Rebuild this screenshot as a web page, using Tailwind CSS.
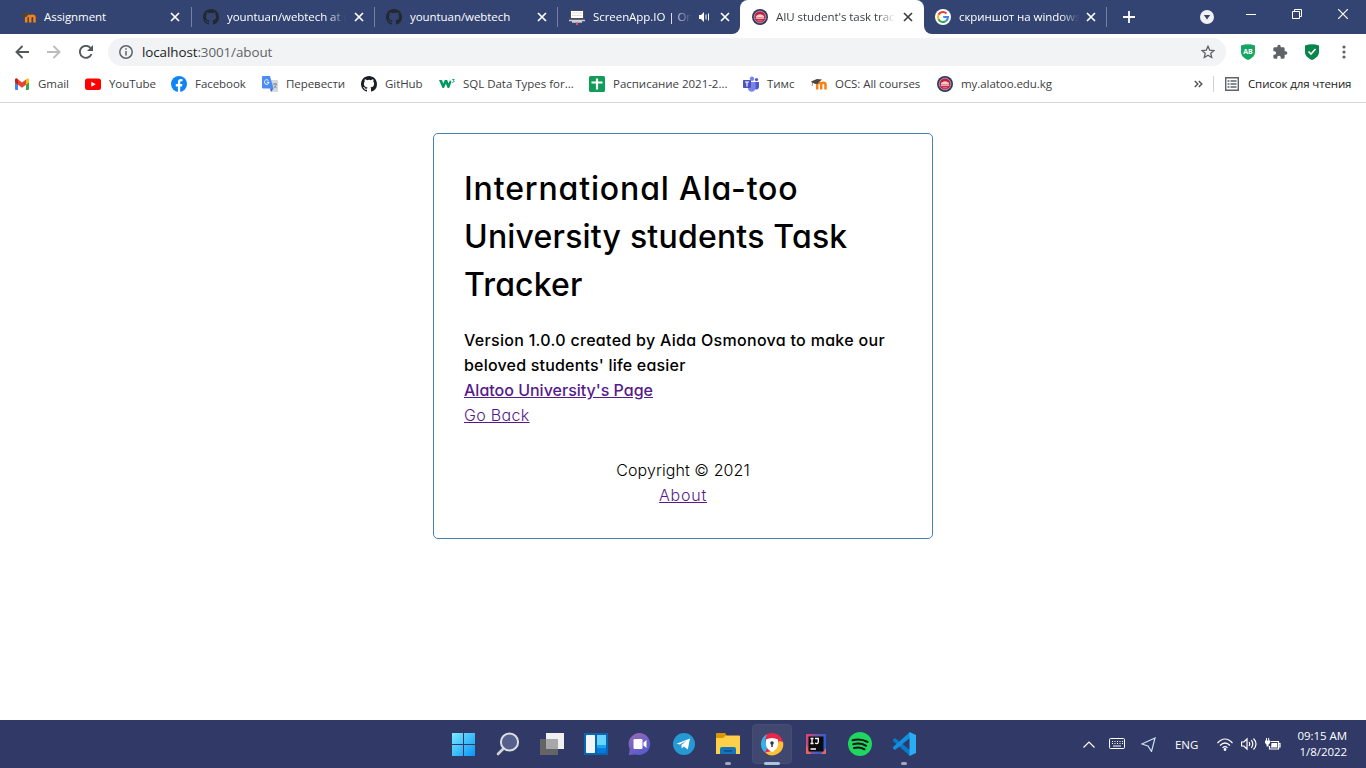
<!DOCTYPE html>
<html lang="en">
<head>
<meta charset="utf-8">
<title>AIU student's task tracker</title>
<script src="https://cdn.jsdelivr.net/npm/@tailwindcss/browser@4"></script>
</head>
<body class="flex h-screen w-screen flex-col overflow-hidden bg-white font-['Open_Sans',sans-serif] text-[11.5px] leading-4 tracking-[-0.06px] whitespace-nowrap text-[#3c4043]">
<svg class="hidden">
  <symbol id="x" viewBox="0 0 10 10"><path d="M1 1l8 8M9 1L1 9" fill="none" stroke="currentColor" stroke-width="1.7"/></symbol>
  <symbol id="github" viewBox="0 0 16 16"><path fill="currentColor" d="M8 0C3.58 0 0 3.58 0 8c0 3.54 2.29 6.53 5.47 7.59.4.07.55-.17.55-.38 0-.19-.01-.82-.01-1.49-2.01.37-2.53-.49-2.69-.94-.09-.23-.48-.94-.82-1.13-.28-.15-.68-.52-.01-.53.63-.01 1.08.58 1.23.82.72 1.21 1.87.87 2.33.66.07-.52.28-.87.51-1.07-1.78-.2-3.64-.89-3.64-3.95 0-.87.31-1.59.82-2.15-.08-.2-.36-1.02.08-2.12 0 0 .67-.21 2.2.82a7.6 7.6 0 0 1 4 0c1.53-1.04 2.2-.82 2.2-.82.44 1.1.16 1.92.08 2.12.51.56.82 1.27.82 2.15 0 3.07-1.87 3.75-3.65 3.95.29.25.54.73.54 1.48 0 1.07-.01 1.93-.01 2.2 0 .21.15.46.55.38A8 8 0 0 0 16 8c0-4.42-3.58-8-8-8z"/></symbol>
  <symbol id="aiu" viewBox="0 0 16 16"><circle cx="8" cy="8" r="8" fill="#34365e"/><circle cx="8" cy="8" r="5.900" fill="#c3203a" stroke="#a9a2b5" stroke-width=".9"/><path d="M4 7Q8 3.500 12 7v1.500H4z" fill="#f3cdd2"/><path d="M3.800 9.300h8.400" stroke="#eaa9b1" stroke-width="1.600"/><path d="M5.500 11.800h5" stroke="#e0808c"/></symbol>
  <symbol id="moodle" viewBox="0 0 16 16"><path d="M6.200 13.500V8.700c0-2.600 4-2.600 4 0v4.800M10.200 8.700c0-2.600 4.300-2.600 4.300 0v4.800" fill="none" stroke="#f98012" stroke-width="2.500"/><path d="M0 5.500l6-2.500 5 .4-3.500 3.200-1 1.500-3-.3-2-1.300v3.500H.9V6.600z" fill="#4b4540"/></symbol>
  <symbol id="google" viewBox="0 0 16 16"><circle cx="8" cy="8" r="8" fill="#fff"/><path d="M11.500 4.500A5 5 0 0 0 3.500 5.800" fill="none" stroke="#ea4335" stroke-width="2"/><path d="M3.500 5.800a5 5 0 0 0 0 4.400" fill="none" stroke="#fbbc05" stroke-width="2"/><path d="M3.500 10.200A5 5 0 0 0 11 12" fill="none" stroke="#34a853" stroke-width="2"/><path d="M11 12a5 5 0 0 0 2-4H8.200" fill="none" stroke="#4285f4" stroke-width="2"/></symbol>
</svg>

<!-- Tab strip -->
<header class="flex h-[34px] shrink-0 bg-white text-white">
  <div class="flex w-[740px] rounded-br-lg bg-[#334472] pl-2">
    <div class="flex w-[184px] items-center pl-3">
      <svg class="size-4"><use href="#moodle"/></svg><span class="ml-2 w-[123px] overflow-hidden">Assignment</span><svg class="ml-[3px] size-[10px]"><use href="#x"/></svg>
      <i class="ml-auto h-5 w-px bg-[#76819f]"></i>
    </div>
    <div class="flex w-[183px] items-center pl-[11px]">
      <svg class="size-4 text-[#23272e]"><use href="#github"/></svg><span class="ml-2 w-[119px] overflow-hidden mask-r-from-85% mask-r-to-100%">yountuan/webtech at main</span><svg class="ml-[8px] size-[10px]"><use href="#x"/></svg>
      <i class="ml-auto h-5 w-px bg-[#76819f]"></i>
    </div>
    <div class="flex w-[183px] items-center pl-[11px]">
      <svg class="size-4 text-[#23272e]"><use href="#github"/></svg><span class="ml-2 w-[119px] overflow-hidden">yountuan/webtech</span><svg class="ml-[8px] size-[10px]"><use href="#x"/></svg>
      <i class="ml-auto h-5 w-px bg-[#76819f]"></i>
    </div>
    <div class="flex w-[182px] items-center pl-[11px]">
      <svg class="size-4" viewBox="0 0 16 16"><path d="M1.500 1.500h13v8h-13z" fill="#fff" stroke="#4b4b50"/><path d="M3 4h10M3 6.500h10" stroke="#ddd"/><path d="M0 11.500h16M3 13h10" stroke="#cfcfd2" stroke-width="1.300"/><path d="M8 13.500V16" stroke="#d65562" stroke-width="2"/></svg>
      <span class="ml-2 w-[99px] overflow-hidden mask-r-from-80% mask-r-to-100%">ScreenApp.IO | Online</span>
      <svg class="ml-[7px] h-3 w-[11px]" viewBox="0 0 11 12"><path d="M0 4h2l3-3v10L2 8H0z" fill="#fff"/><path d="M7 3.500v5M9.500 2.500v7" stroke="#fff"/></svg>
      <svg class="ml-[10px] size-[10px]"><use href="#x"/></svg>
    </div>
  </div>
  <div class="w-[184px] bg-[linear-gradient(#334472_50%,#fff_50%)]">
    <div class="flex h-full items-center rounded-t-lg bg-white pl-3 text-[#3c4043]">
      <svg class="size-4"><use href="#aiu"/></svg><span class="ml-2 w-[119px] overflow-hidden mask-r-from-85% mask-r-to-100%">AIU student's task tracker</span><svg class="ml-[8px] size-[10px]"><use href="#x"/></svg>
    </div>
  </div>
  <div class="flex flex-1 rounded-bl-lg bg-[#334472]">
    <div class="flex w-[183px] items-center pl-[11px]">
      <svg class="size-4"><use href="#google"/></svg><span class="ml-2 w-[120px] overflow-hidden mask-r-from-85% mask-r-to-100%">скриншот на windows 10</span><svg class="ml-[7px] size-[10px]"><use href="#x"/></svg>
      <i class="ml-auto h-5 w-px bg-[#76819f]"></i>
    </div>
    <div class="flex flex-1 items-center">
      <svg class="ml-4 size-3" viewBox="0 0 12 12"><path d="M6 0v12M0 6h12" stroke="#fff" stroke-width="1.800"/></svg>
      <svg class="ml-[65px] size-[14px]" viewBox="0 0 14 14"><circle cx="7" cy="7" r="7" fill="#f1f1f1"/><path d="M3.800 5h6.400L7 9.500z" fill="#334472"/></svg>
      <svg class="mb-1.5 ml-8 h-3 w-[10px]" viewBox="0 0 10 12"><path d="M0 6.500h10" stroke="#fff"/></svg>
      <svg class="mb-1.5 ml-[36px] size-[10px]" viewBox="0 0 10 10" fill="none" stroke="#fff"><path d="M.5 2.500h7v7h-7zM2.500 2.500v-2h7v7h-2"/></svg>
      <svg class="mb-1.5 ml-[36px] size-[10px]" viewBox="0 0 10 10"><path d="M0 0l10 10M10 0L0 10" stroke="#fff" stroke-width="1.200"/></svg>
    </div>
  </div>
</header>

<!-- Toolbar -->
<div class="flex h-9 shrink-0 items-center text-[#5f6368]">
  <svg class="ml-[15px] size-[14px]" viewBox="0 0 14 14" fill="none" stroke="#54585d" stroke-width="1.900"><path d="M14 7H1.500M7.500 1L1.500 7l6 6"/></svg>
  <svg class="ml-[18px] size-[14px]" viewBox="0 0 14 14" fill="none" stroke="#babcbe" stroke-width="1.900"><path d="M0 7h12.500M6.500 1l6 6-6 6"/></svg>
  <svg class="ml-[18px] size-[14px]" viewBox="0 0 14 14"><path d="M12.500 9A6 6 0 1 1 11.500 3" fill="none" stroke="#54585d" stroke-width="1.900"/><path d="M14 0v6H8z" fill="#54585d"/></svg>
  <div class="ml-[15px] flex h-7 w-[1118px] items-center rounded-full bg-[#f1f3f4] pl-[11px]">
    <svg class="size-[14px]" viewBox="0 0 14 14" fill="none" stroke="#5f6368" stroke-width="1.500"><circle cx="7" cy="7" r="6.200"/><path d="M7 6v4.500M7 3.300v1.500"/></svg>
    <span class="ml-[9px] text-[13.4px] tracking-[-0.08px]"><span class="text-[#202124]">localhost</span>:3001/about</span>
    <svg class="mr-[11px] ml-auto size-[14px]" viewBox="0 0 14 14"><path d="M7 1.200l1.700 3.900 4.300.4-3.200 2.800.9 4.200L7 10.300l-3.700 2.200.9-4.200L1 5.500l4.300-.4z" fill="none" stroke="#5f6368" stroke-width="1.300"/></svg>
  </div>
  <svg class="ml-[14px] size-4" viewBox="0 0 16 16"><path d="M1 1.500Q8-1 15 1.500V8c0 4-3.500 6.500-7 8-3.500-1.500-7-4-7-8z" fill="#16a763"/><text x="8" y="10" font-size="7" font-weight="700" letter-spacing="0" text-anchor="middle" fill="#fff">AB</text></svg>
  <svg class="ml-4 size-4" viewBox="0 0 24 24"><path fill="#5f6368" d="M20.500 11H19V7a2 2 0 0 0-2-2h-4V3.500a2.500 2.500 0 0 0-5 0V5H4a2 2 0 0 0-2 2v3.800h1.500a2.700 2.700 0 0 1 0 5.400H2V20c0 1.100.9 2 2 2h3.800v-1.500a2.700 2.700 0 0 1 5.400 0V22H17a2 2 0 0 0 2-2v-4h1.500a2.500 2.500 0 0 0 0-5z"/></svg>
  <svg class="ml-4 size-4" viewBox="0 0 16 16"><path d="M1 1.500Q8-1 15 1.500V8c0 4-3.500 6.500-7 8-3.500-1.500-7-4-7-8z" fill="#07864b"/><path d="M4.500 7.500l2.500 2.500 4.500-5" fill="none" stroke="#fff" stroke-width="1.600"/></svg>
  <svg class="ml-[22px] h-[14px] w-1" viewBox="0 0 4 14" fill="#5f6368"><circle cx="2" cy="2" r="1.600"/><circle cx="2" cy="7" r="1.600"/><circle cx="2" cy="12" r="1.600"/></svg>
</div>

<!-- Bookmarks -->
<nav class="flex h-[33px] shrink-0 items-center border-b border-[#d5d7da] pb-1 pl-[14px]">
  <div class="flex w-[71px] items-center gap-2"><svg class="size-4" viewBox="0 0 16 16"><path d="M1 3.500h3V14H2a1 1 0 0 1-1-1z" fill="#4285f4"/><path d="M12 3.500h3V13a1 1 0 0 1-1 1h-2z" fill="#34a853"/><path d="M12 4l1-1.200c1-.8 2-.1 2 1.200v2.500l-3 2.300z" fill="#fbbc04"/><path d="M1 6.500V4c0-1.500 1.300-2 2.300-1.200L8 6.400l4-3v5.400l-4 3-4-3z" fill="#ea4335"/><path d="M1 6.500V4c0-1.500 1.300-2 2.300-1.200L4 3.400v5.400z" fill="#c5221f"/></svg>Gmail</div>
  <div class="flex w-[86px] items-center gap-2"><svg class="size-4" viewBox="0 0 16 16"><rect y="2.500" width="16" height="11.500" rx="2.500" fill="#f00"/><path d="M6.300 5.700v5l4.400-2.500z" fill="#fff"/></svg>YouTube</div>
  <div class="flex w-[91px] items-center gap-2"><svg class="size-4" viewBox="0 0 16 16"><circle cx="8" cy="8" r="8" fill="#0f84f3"/><path d="M6.900 16v-5.600H4.800V8h2.100V6.300c0-2.200 1.200-3.200 3-3.200l1.600.1v2h-1.100c-1 0-1.200.5-1.200 1.200V8h2.200l-.4 2.400H9.200V16z" fill="#fff"/></svg>Facebook</div>
  <div class="flex w-[99px] items-center gap-2"><svg class="size-4" viewBox="0 0 16 16"><path d="M6 4h9a1 1 0 0 1 1 1v10a1 1 0 0 1-1 1H9z" fill="#d5d8dc"/><path d="M1 0h7l3.500 12.500H1a1 1 0 0 1-1-1V1a1 1 0 0 1 1-1z" fill="#4c8bf5"/><path d="M8 12.500h3.500L9 16z" fill="#3367d6"/><path d="M6.500 4.600A2.300 2.300 0 1 0 7 6.300H4.800" fill="none" stroke="#fff"/><path d="M10.800 8H15M13 7v1M14.300 8.200c-.5 2-1.500 3-2.500 3.800M12 9.500l2.500 2.700" fill="none" stroke="#6d7a86" stroke-width=".8"/></svg>Перевести</div>
  <div class="flex w-[78px] items-center gap-2"><svg class="size-4 text-[#1b1f23]"><use href="#github"/></svg>GitHub</div>
  <div class="flex w-[150px] items-center gap-2 tracking-[-0.02px]"><svg class="size-4" viewBox="0 0 16 16"><path d="M0 4h3l1.300 3.500L5.800 4h2.400l1.400 3.500L11 4l1.500 2-2.300 6H8.700L6.800 7.800 5 12H3.500z" fill="#059862"/><path d="M13.200 3.500h2l-1 1.200c1.300 0 1.300 2-.9 1.500" fill="none" stroke="#059862" stroke-width=".9"/></svg>SQL Data Types for...</div>
  <div class="flex w-[154px] items-center gap-2 tracking-[-0.02px]"><svg class="size-4" viewBox="0 0 16 16"><rect width="16" height="16" rx="1.500" fill="#109d58"/><path d="M2.500 6.500h11M8 2.500v11" stroke="#fff" stroke-width="2.200"/></svg>Расписание 2021-2...</div>
  <div class="flex w-[68px] items-center gap-2"><svg class="size-4" viewBox="0 0 16 16"><circle cx="9" cy="2.800" r="2.200" fill="#7b83eb"/><circle cx="13.500" cy="3.600" r="1.600" fill="#5059c9"/><path d="M11 6h5v5a2.500 2.500 0 0 1-4 2z" fill="#5059c9"/><path d="M5 6h7.500v6c0 5-7.500 5-7.500 0z" fill="#7b83eb"/><rect y="4" width="8" height="8" rx=".8" fill="#4b53bc"/><path d="M2 6h4M4 6v4.500" stroke="#fff" stroke-width="1.200"/></svg>Тимс</div>
  <div class="flex w-[126px] items-center gap-2"><svg class="size-4"><use href="#moodle"/></svg>OCS: All courses</div>
  <div class="flex items-center gap-2"><svg class="size-4"><use href="#aiu"/></svg>my.alatoo.edu.kg</div>
  <svg class="ml-auto h-2 w-[9px]" viewBox="0 0 9 8" fill="none" stroke="#54585d" stroke-width="1.500"><path d="M.8 1l3 3-3 3M4.800 1l3 3-3 3"/></svg>
  <i class="ml-[10px] h-4 w-px bg-[#cfd1d4]"></i>
  <svg class="ml-[11px] size-[14px]" viewBox="0 0 14 14" fill="none" stroke="#5f6368" stroke-width="1.400"><path d="M.7.700h12.600v12.600H.7zM2.500 4h2M2.500 7h2M2.500 10h2M5.500 4h6M5.500 7h6M5.500 10h6"/></svg>
  <span class="mr-[15px] ml-[9px] w-[103px] tracking-[-0.12px] text-[#202124]">Список для чтения</span>
</nav>

<!-- Page -->
<main class="flex-1 pt-[30px] font-['Inter',sans-serif] text-base tracking-normal text-black [font-feature-settings:'cv11']">
  <section class="mx-auto h-[406px] w-[500px] rounded-[5px] border border-[#4682b4] p-[30px]">
    <h1 class="pt-px text-[32px] leading-[48px] font-medium"><span class="tracking-[0.86px]">International Ala-too</span><br><span class="tracking-[0.2px]">University students Task</span><br><span class="tracking-[0.15px]">Tracker</span></h1>
    <h4 class="mt-[19px] leading-[25px] font-medium"><span class="tracking-[0.3px]">Version 1.0.0 created by Aida Osmonova to make our</span><br><span class="tracking-[0.2px]">beloved students' life easier</span><br><a class="text-[#551a8b] underline">Alatoo University's Page</a></h4>
    <a class="block w-fit leading-[25px] font-light tracking-[0.33px] text-[#551a8b] underline">Go Back</a>
    <footer class="mt-[30px] text-center leading-[25px] font-light"><p class="tracking-[0.08px]">Copyright © 2021</p><a class="tracking-[0.75px] text-[#551a8b] underline">About</a></footer>
  </section>
</main>

<!-- Taskbar -->
<footer class="flex h-12 shrink-0 items-center bg-[#313966] pl-[442px] text-white">
  <div class="flex w-11 justify-center"><svg class="size-6" viewBox="0 0 24 24"><defs><linearGradient id="w" x2="1" y2="1"><stop stop-color="#7aeaff"/><stop offset="1" stop-color="#0a94f5"/></linearGradient></defs><path d="M0 1h11v11H0zM12 1h11v11H12zM0 13h11v11H0zM12 13h11v11H12z" fill="url(#w)"/></svg></div>
  <div class="flex w-11 justify-center"><svg class="size-6" viewBox="0 0 24 24"><path d="M8 16l-6 6" stroke="#cfd2d6" stroke-width="2.600" stroke-linecap="round"/><circle cx="13.500" cy="10" r="8.600" fill="#57608c" stroke="#dcdfe2" stroke-width="2"/></svg></div>
  <div class="flex w-11 justify-center"><svg class="size-6" viewBox="0 0 24 24"><path d="M6 1h18v16H6z" fill="#f0f0f0"/><path d="M0 7h18v16H0z" fill="#646464"/><path d="M6 7h12v10H6z" fill="#a8a8a8"/></svg></div>
  <div class="flex w-11 justify-center"><svg class="size-6" viewBox="0 0 24 24"><path d="M0 1h24v22H0z" fill="#0966b5"/><rect x="2" y="3" width="9" height="18" rx=".8" fill="#f4f5f6"/><path d="M13 3h9v10h-9z" fill="#69d5ff"/><path d="M13 13h9v3.500h-9z" fill="#16a5f3"/><path d="M13 16.500h9V21h-9z" fill="#0879df"/></svg></div>
  <div class="flex w-11 justify-center"><svg class="size-6" viewBox="0 0 24 24"><defs><linearGradient id="c" x2=".6" y2="1"><stop stop-color="#9a6bb5"/><stop offset="1" stop-color="#575bce"/></linearGradient></defs><path d="M12 1a11 11 0 1 1-4 21.500L.8 23l1-6A11 11 0 0 1 12 1z" fill="url(#c)"/><rect x="5.500" y="7" width="9" height="10" rx="1.200" fill="#fff"/><path d="M15.500 10.500L18.500 8v8l-3-2.500z" fill="#fff"/></svg></div>
  <div class="flex w-11 justify-center"><svg class="size-6" viewBox="0 0 24 24"><circle cx="12" cy="12" r="11" fill="#2499d3"/><path d="M4.500 11.800L18 6.500l-2.200 11-4-3-2 2-.5-3.500 5.500-4.500-7 4z" fill="#fff"/></svg></div>
  <div class="relative flex h-10 w-11 items-center justify-center"><svg class="size-6" viewBox="0 0 24 24"><path d="M0 2a1 1 0 0 1 1-1h8l2 3v4H0z" fill="#d99700"/><path d="M10 3.500h13a1 1 0 0 1 1 1V22H0V6h7z" fill="#ffd04a"/><path d="M4 22v-5a2 2 0 0 1 2-2h12a2 2 0 0 1 2 2v5z" fill="#1475bd"/><path d="M8 19h8" stroke="#0b518c" stroke-width="1.500"/></svg><i class="absolute -bottom-px h-[3px] w-1.5 rounded-full bg-[#a5a8bd]"></i></div>
  <div class="relative mx-0.5 flex size-10 items-center justify-center rounded border border-[#464e77] bg-[#404870]"><svg class="size-6" viewBox="0 0 24 24"><circle cx="12" cy="12" r="11" fill="#e9274b"/><path d="M7 2.200A11 11 0 0 0 5 20.500L8 14 5 8z" fill="#31b4ed"/><path d="M23 10A11 11 0 0 1 5 20.500l7-1.500 7-10z" fill="#fdc13a"/><path d="M6 7.500Q12 4.500 18 7.500V12c0 4-3 6.500-6 8-3-1.500-6-4-6-8z" fill="#fff"/><circle cx="12" cy="11" r="1.800" fill="#30364b"/><path d="M12 11v4" stroke="#30364b" stroke-width="1.500"/></svg><i class="absolute -bottom-0.5 h-[3px] w-4 rounded-full bg-[#acc4df]"></i></div>
  <div class="flex w-11 justify-center"><svg class="size-6" viewBox="0 0 24 24"><defs><linearGradient id="j" x2="1" y2=".3"><stop stop-color="#e9426d"/><stop offset=".5" stop-color="#7b53a7"/><stop offset="1" stop-color="#275fd8"/></linearGradient></defs><path d="M2 2h20v20H2z" fill="url(#j)"/><path d="M2 12l5 10H2zM17 22h5v-6z" fill="#ea645c"/><path d="M4.500 4.500h15v15h-15z" fill="#0b0b0b"/><path d="M6.500 6.500h3M8 6.500v5M6.500 11.500h3M11 6.500h3.300V10c0 1.500-1.500 2-3.300 1M6.500 17H12" fill="none" stroke="#fff" stroke-width="1.300"/></svg></div>
  <div class="flex w-11 justify-center"><svg class="size-6" viewBox="0 0 24 24"><circle cx="12" cy="12" r="12" fill="#1ed760"/><path d="M4.500 8.300q8-2.300 15 1.600M5.300 12.300q7-2 12.800 1.500M6 16q6-1.500 10.500 1.300" fill="none" stroke="#0e1611" stroke-width="2" stroke-linecap="round"/></svg></div>
  <div class="relative flex h-10 w-11 items-center justify-center"><svg class="size-6" viewBox="0 0 24 24"><path d="M1 7.500l2-1.500L18 18v6L1 9z" fill="#087ac9"/><path d="M1 16.500L3 18 18 6V0L1 15z" fill="#1190df"/><path d="M17.500 0L24 3v18l-6.500 3z" fill="#2badf5"/></svg><i class="absolute -bottom-px h-[3px] w-1.5 rounded-full bg-[#a5a8bd]"></i></div>

  <svg class="ml-[157px] h-[7px] w-3" viewBox="0 0 12 7"><path d="M.5 6.500L6 1l5.500 5.500" fill="none" stroke="#fff" stroke-width="1.200"/></svg>
  <svg class="ml-[14px] h-3 w-4" viewBox="0 0 16 12" fill="none" stroke="#fff"><rect x=".5" y=".5" width="15" height="10" rx="1"/><path d="M3 3.500h11M3 5.500h11" stroke-dasharray="1 1.500"/><path d="M4 8h8"/></svg>
  <svg class="ml-4 size-[15px]" viewBox="0 0 15 15"><path d="M14 1L10.500 14.500 7 9 .8 7z" fill="none" stroke="#cce1f3" stroke-width="1.200"/></svg>
  <span class="ml-[19px] w-[23px] pt-0.5">ENG</span>
  <svg class="ml-[19px] h-[13px] w-4" viewBox="0 0 16 13" fill="none" stroke="#fff" stroke-width="1.200"><path d="M.5 5Q8-3 15.500 5M3 7.500q5-5 10 0M5.500 9.800Q8 7.300 10.500 9.800"/><circle cx="8" cy="11.500" r=".8" fill="#fff"/></svg>
  <svg class="ml-2 h-[14px] w-4" viewBox="0 0 16 14" fill="none" stroke="#fff" stroke-width="1.200"><path d="M.5 5h2.300L6 2v10L2.800 9H.5zM8 5q1.500 2 0 4M10.300 3.200q3 3.800 0 7.600M12.500 1.500q5 5.500 0 11"/></svg>
  <svg class="ml-2 h-[13px] w-4" viewBox="0 0 16 13"><path d="M5.500 3.500h8v7.500h-9V8M13.500 5.500H15v3.500h-1.500" fill="none" stroke="#fff" stroke-width="1.200"/><path d="M6.500 5h5.700v4.500H6z M0 2.500h5v2.500L3.500 6.500v2h-2v-2L0 5z" fill="#fff"/><path d="M1.500 0v3M3.700 0v3" stroke="#fff"/></svg>
  <div class="mr-[19px] ml-auto text-right"><p>09:15 AM</p><p>1/8/2022</p></div>
</footer>
</body>
</html>
